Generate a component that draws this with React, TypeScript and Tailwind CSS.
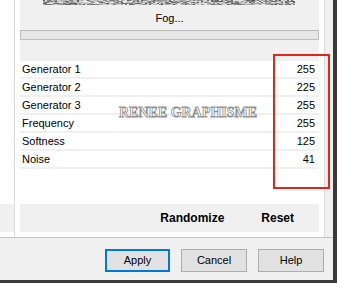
import React from "react";

const rows: [string, number][] = [
  ["Generator 1", 255],
  ["Generator 2", 225],
  ["Generator 3", 255],
  ["Frequency", 255],
  ["Softness", 125],
  ["Noise", 41],
];

// small grayscale noise strip (preview image cut off at the top)
function NoiseStrip() {
  let seed = 7;
  const rnd = () => {
    seed = (seed * 16807) % 2147483647;
    return seed / 2147483647;
  };
  const cells: JSX.Element[] = [];
  for (let y = 0; y < 5; y++) {
    for (let x = 0; x < 252; x += 2) {
      const v = Math.floor(90 + rnd() * 150);
      cells.push(<rect key={`${x}-${y}`} x={x} y={y} width={2} height={1} fill={`rgb(${v},${v},${v})`} />);
    }
  }
  return (
    <svg width={252} height={5} className="ml-[23px] block">
      {cells}
    </svg>
  );
}

function Button({ label, primary }: { label: string; primary?: boolean }) {
  return (
    <div
      className={`flex h-[23px] items-center justify-center bg-[#e1e1e1] ${
        primary ? "w-[65px] border-2 border-[#0078d7]" : "w-[66px] border border-[#adadad]"
      }`}
    >
      {label}
    </div>
  );
}

export default function App() {
  return (
    <div className="relative flex h-[283px] w-[337px] flex-col overflow-hidden bg-[#f0f0f0] font-['Liberation_Sans',Arial,sans-serif] text-[11px] leading-none text-black">
      <div className="flex h-[280px]">
        <div className="flex w-[333px] flex-col">
          {/* dialog body */}
          <div className="flex h-[238px] border-b border-[#c4c4c4]">
            <div className="flex w-[14px] flex-col bg-white">
              <div className="h-[204px]" />
              <div className="h-[28px] bg-[#f0f0f0]" />
            </div>
            <div className="flex w-[311px] flex-col border-x border-[#dcdcdc] bg-white px-[5px]">
              <div className="flex h-[61px] flex-col bg-[#f0f0f0]">
                <NoiseStrip />
                <div className="mt-[6px] flex h-[14px] items-center justify-center">Fog...</div>
                <div className="mt-[5px] h-[10px] border border-[#bcbcbc] bg-[#e6e6e6]" />
              </div>
              {rows.map(([name, value]) => (
                <div
                  key={name}
                  className="flex h-[18px] items-center justify-between border-b-2 border-[#f0f0f0] pl-[2px] pr-[4px]"
                >
                  <span>{name}</span>
                  <span>{value}</span>
                </div>
              ))}
              <div className="h-[35px]" />
              <div className="flex h-[28px] items-center justify-end gap-[37px] bg-[#f0f0f0] pr-[25px] text-[12px] font-bold">
                <span>Randomize</span>
                <span>Reset</span>
              </div>
            </div>
            <div className="w-[8px] bg-[#f0f0f0]" />
          </div>
          {/* buttons */}
          <div className="flex h-[42px] items-start justify-end gap-[11px] pr-[9px] pt-[11px]">
            <Button label="Apply" primary />
            <Button label="Cancel" />
            <Button label="Help" />
          </div>
        </div>
        <div className="w-[4px] bg-[#3a3a3a]" />
      </div>
      <div className="h-[3px] bg-[#3a3a3a]" />

      {/* watermark */}
      <div className="absolute left-[119px] top-[106px] font-['Liberation_Serif',serif] text-[14px] font-bold text-white [-webkit-text-stroke:0.8px_#8f8f8f]">
        RENEE GRAPHISME
      </div>

      {/* red highlight */}
      <div className="absolute left-[273px] top-[54px] h-[135px] w-[57px] border-2 border-[#e3261c]" />
    </div>
  );
}
